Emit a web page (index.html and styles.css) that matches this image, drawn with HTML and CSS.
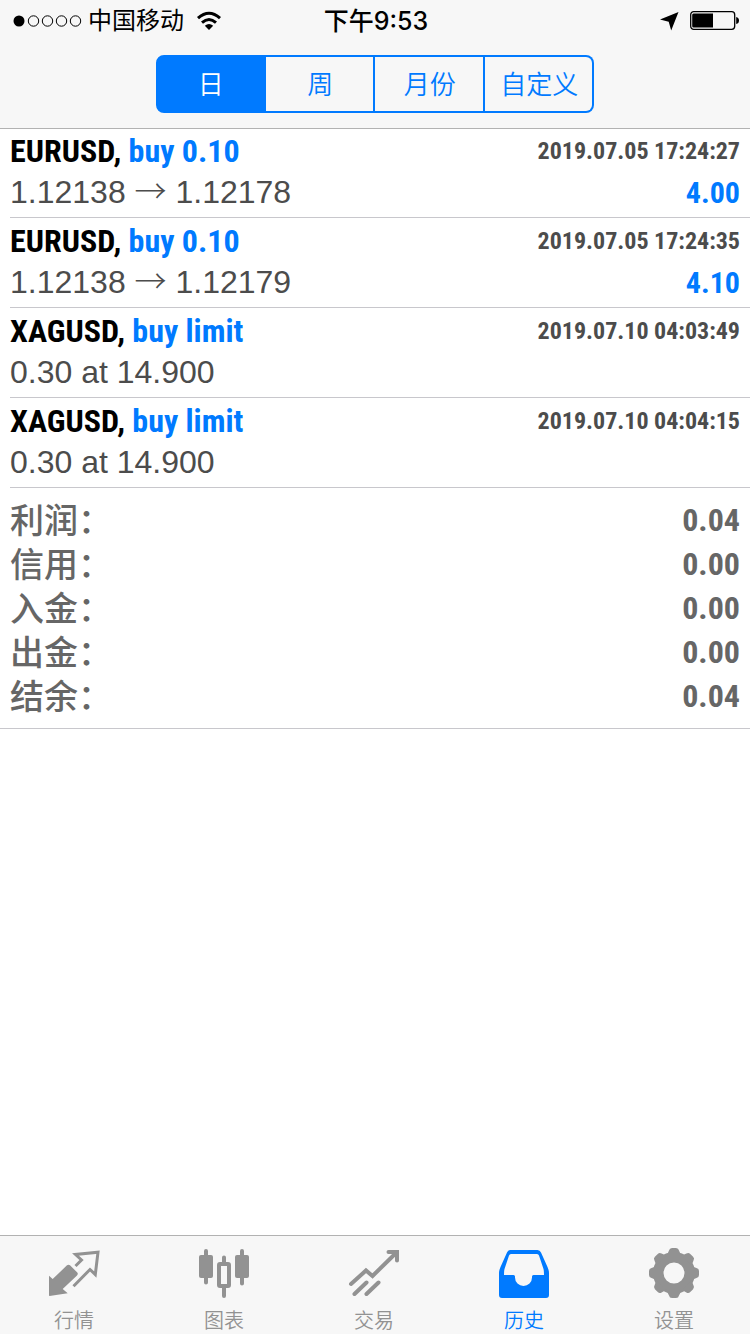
FILE: index.html
```
<!DOCTYPE html>
<html lang="zh-CN">
<head>
<meta charset="utf-8">
<meta name="viewport" content="width=device-width, initial-scale=1">
<title>历史</title>
<link rel="stylesheet" href="styles.css">
</head>
<body>
<div class="app">
  <header class="header">
    <div class="status">
      <div class="status-left">
        <svg class="signal" width="70" height="14" viewBox="0 0 70 14" aria-hidden="true">
          <circle cx="7" cy="7" r="5.5"/>
          <g fill="none" stroke="#000" stroke-width="1"><circle cx="21.500" cy="7" r="5.2"/><circle cx="35.500" cy="7" r="5.2"/><circle cx="49.500" cy="7" r="5.2"/><circle cx="63.500" cy="7" r="5.2"/></g>
        </svg>
        <span class="carrier">中国移动</span>
        <svg width="26" height="20" viewBox="0 0 26 20" aria-hidden="true">
          <g fill="none" stroke="#000" stroke-width="3"><path d="M2 7.2Q13-2.8 24 7.2"/><path d="M6 11.6Q13 5.4 20 11.6"/></g>
          <path d="M8.8 14.7Q13 11.4 17.2 14.7L13 19Z"/>
        </svg>
      </div>
      <div class="status-time">下午9:53</div>
      <div class="status-right">
        <svg width="19" height="19" viewBox="0 0 19 19" aria-hidden="true"><path d="M0 7.5 18.5 0 11.2 18.5 8.7 9.7Z"/></svg>
        <svg width="50" height="20" viewBox="0 0 50 20" aria-hidden="true">
          <rect x=".7" y=".7" width="44" height="17.6" rx="3" fill="none" stroke="#000" stroke-width="1.3"/>
          <path d="M3.500 2.500H23V16.500H3.500Q2.200 16.500 2.200 15V4Q2.200 2.500 3.500 2.500Z"/>
          <path d="M46.200 6Q49 6.500 49 9.500T46.200 13Z"/>
        </svg>
      </div>
    </div>
    <div class="segments" role="group" aria-label="时间段">
      <button class="segment active" type="button" aria-pressed="true">日</button>
      <button class="segment" type="button" aria-pressed="false">周</button>
      <button class="segment" type="button" aria-pressed="false">月份</button>
      <button class="segment" type="button" aria-pressed="false">自定义</button>
    </div>
  </header>

  <main class="content">
    <ul class="deals">
      <li class="deal">
        <div class="line"><span class="symbol">EURUSD, <span class="side">buy 0.10</span></span><time class="time">2019.07.05 17:24:27</time></div>
        <div class="line"><span class="price">1.12138 <span class="arrow">→</span> 1.12178</span><span class="profit">4.00</span></div>
      </li>
      <li class="deal">
        <div class="line"><span class="symbol">EURUSD, <span class="side">buy 0.10</span></span><time class="time">2019.07.05 17:24:35</time></div>
        <div class="line"><span class="price">1.12138 <span class="arrow">→</span> 1.12179</span><span class="profit">4.10</span></div>
      </li>
      <li class="deal">
        <div class="line"><span class="symbol">XAGUSD, <span class="side">buy limit</span></span><time class="time">2019.07.10 04:03:49</time></div>
        <div class="line"><span class="price">0.30 at 14.900</span></div>
      </li>
      <li class="deal">
        <div class="line"><span class="symbol">XAGUSD, <span class="side">buy limit</span></span><time class="time">2019.07.10 04:04:15</time></div>
        <div class="line"><span class="price">0.30 at 14.900</span></div>
      </li>
    </ul>
    <dl class="summary">
      <div class="total"><dt>利润：</dt><dd>0.04</dd></div>
      <div class="total"><dt>信用：</dt><dd>0.00</dd></div>
      <div class="total"><dt>入金：</dt><dd>0.00</dd></div>
      <div class="total"><dt>出金：</dt><dd>0.00</dd></div>
      <div class="total"><dt>结余：</dt><dd>0.04</dd></div>
    </dl>
  </main>

  <nav class="tabs">
    <a class="tab" href="#quotes">
      <svg class="icon" viewBox="0 0 52 52" aria-hidden="true">
        <path d="M1 28.700 4.700 32 19 18.300Q20.500 17 22 18.300L29.300 25.500Q30.500 27 29 28.500L14.700 42 19.700 46.300 1.500 49Q1 49 1 48Z"/>
        <path d="M25.500 39.300 42 22.500 47.300 27.500 50 5.200 27.500 7.500 33.500 13 27.500 19" fill="none" stroke="currentColor" stroke-width="3"/>
      </svg>
      <span>行情</span>
    </a>
    <a class="tab" href="#chart">
      <svg class="icon" viewBox="0 0 52 52" aria-hidden="true">
        <rect x="1" y="8" width="14" height="23" rx="2"/><rect x="37" y="8" width="14" height="23" rx="2"/>
        <rect x="21" y="17" width="10" height="22" rx="1" fill="none" stroke="currentColor" stroke-width="4"/>
        <path d="M8 4V35.500M44 4V36.500M26 10.500V15M26 40V49" stroke="currentColor" stroke-width="4" stroke-linecap="round"/>
      </svg>
      <span>图表</span>
    </a>
    <a class="tab" href="#trade">
      <svg class="icon" viewBox="0 0 52 52" aria-hidden="true">
        <g fill="none" stroke="currentColor" stroke-width="4" stroke-linecap="round"><path d="M3 37 18 23.500 24.500 29 48 6M6.500 47 18.500 35.500M18.500 47 30.500 35.500"/><path d="M40.500 5H49V13.500" stroke-linejoin="miter"/></g>
      </svg>
      <span>交易</span>
    </a>
    <a class="tab current" href="#history" aria-current="page">
      <svg class="icon" viewBox="0 0 52 52" aria-hidden="true">
        <path fill-rule="evenodd" d="M12.500 3H39.500Q42 3 43 5.500L49.500 20Q51 23.500 51 26V48Q51 51 48 51H4Q1 51 1 48V26Q1 23.500 2.500 20L9 5.500Q10 3 12.500 3ZM13 7Q11.500 7 11 8.500L6.500 22Q6 24 6 28H15.500Q17 28 17 29.500V30.500A8.500 8.500 0 0 0 34 30.500V29.500Q34 28 35.500 28H46Q46 24 45.500 22L41 8.500Q40.500 7 39 7Z"/>
      </svg>
      <span>历史</span>
    </a>
    <a class="tab" href="#settings">
      <svg class="icon" viewBox="0 0 52 52" aria-hidden="true">
        <defs><path id="tooth" d="M17 9Q20.300 7 21 3.500Q21.500 1 24 1H28Q30.500 1 31 3.500Q31.700 7 35 9Z"/></defs>
        <circle cx="26" cy="26" r="15.750" fill="none" stroke="currentColor" stroke-width="10.500"/>
        <use href="#tooth"/><use href="#tooth" transform="rotate(45 26 26)"/><use href="#tooth" transform="rotate(90 26 26)"/><use href="#tooth" transform="rotate(135 26 26)"/><use href="#tooth" transform="rotate(180 26 26)"/><use href="#tooth" transform="rotate(225 26 26)"/><use href="#tooth" transform="rotate(270 26 26)"/><use href="#tooth" transform="rotate(315 26 26)"/>
      </svg>
      <span>设置</span>
    </a>
  </nav>
</div>
</body>
</html>
```
FILE: styles.css
```
:root {
  --blue: #007aff;
  --bar: #f7f7f7;
  --rule: #b2b2b2;
  --sans: "Liberation Sans", "Noto Sans CJK SC", sans-serif;
  --narrow: "Roboto Condensed", "Liberation Sans Narrow", "Liberation Sans", sans-serif;
  --cjk: "Noto Sans CJK SC", sans-serif;
}
* { box-sizing: border-box; }
body { margin: 0; background: #fff; font-family: var(--sans); }
.app { display: flex; flex-direction: column; min-height: 100vh; }

.header { height: 128px; background: var(--bar); box-shadow: 0 1px 0 var(--rule); }
.status {
  display: grid;
  grid-template-columns: 1fr auto 1fr;
  align-items: center;
  height: 42px;
  padding: 0 10px 0 12px;
  font-family: Inter, var(--cjk);
  font-size: 24px;
  line-height: 42px;
}
.status-left, .status-right { display: flex; align-items: center; }
.status-left { gap: 12px; }
.signal { margin-right: -6px; }
.status-right { justify-content: flex-end; gap: 11px; }
.status-time { font-size: 25px; font-weight: 500; }

.segments {
  display: grid;
  grid-template-columns: repeat(4, 1fr);
  width: 438px;
  max-width: 90%;
  height: 58px;
  margin: 13px auto 0;
}
.segment {
  padding: 0 0 2px 2px;
  border: solid var(--blue);
  border-width: 2px 2px 2px 0;
  background: transparent;
  color: var(--blue);
  font: 350 26px/1 var(--cjk);
}
.segment:first-child { padding-left: 0; border-left-width: 2px; border-radius: 8px 0 0 8px; }
.segment:last-child { border-radius: 0 8px 8px 0; }
.segment.active { background: var(--blue); color: #fff; }

.content { flex: 1; }
.deals { margin: 0; padding: 0 0 0 10px; list-style: none; }
.deal { height: 90px; padding: 3px 10px 0 0; border-bottom: 1px solid #c8c7cc; }
.line {
  display: flex;
  align-items: center;
  justify-content: space-between;
  height: 41px;
  line-height: 41px;
  white-space: nowrap;
}
.symbol, .time, .profit { font-family: var(--narrow); font-weight: 700; }
.symbol { font-size: 32px; }
.side, .profit { color: var(--blue); }
.time { color: #4c4c4c; font-size: 24px; }
.price { color: #4c4c4c; font-size: 32px; }
.arrow { font-family: var(--cjk); font-weight: 300; line-height: 1; }
.profit { font-size: 30px; }

.summary { margin: 0; padding: 10px; border-bottom: 1px solid #c8c7cc; color: #666; }
.total { display: flex; justify-content: space-between; height: 44px; line-height: 44px; font-size: 32px; }
.total dt { font: 500 34px/42px var(--cjk); }
.total dd { margin: 0; font-family: var(--narrow); font-weight: 700; }

.tabs {
  display: grid;
  grid-template-columns: repeat(5, 1fr);
  height: 99px;
  border-top: 1px solid var(--rule);
  background: var(--bar);
}
.tab {
  display: flex;
  flex-direction: column;
  align-items: center;
  gap: 7px;
  padding: 11px 2px 0 0;
  color: #929292;
  font: 350 20px/28px var(--cjk);
  text-decoration: none;
}
.tab.current { color: var(--blue); }
.icon { width: 52px; height: 52px; fill: currentColor; }
```
